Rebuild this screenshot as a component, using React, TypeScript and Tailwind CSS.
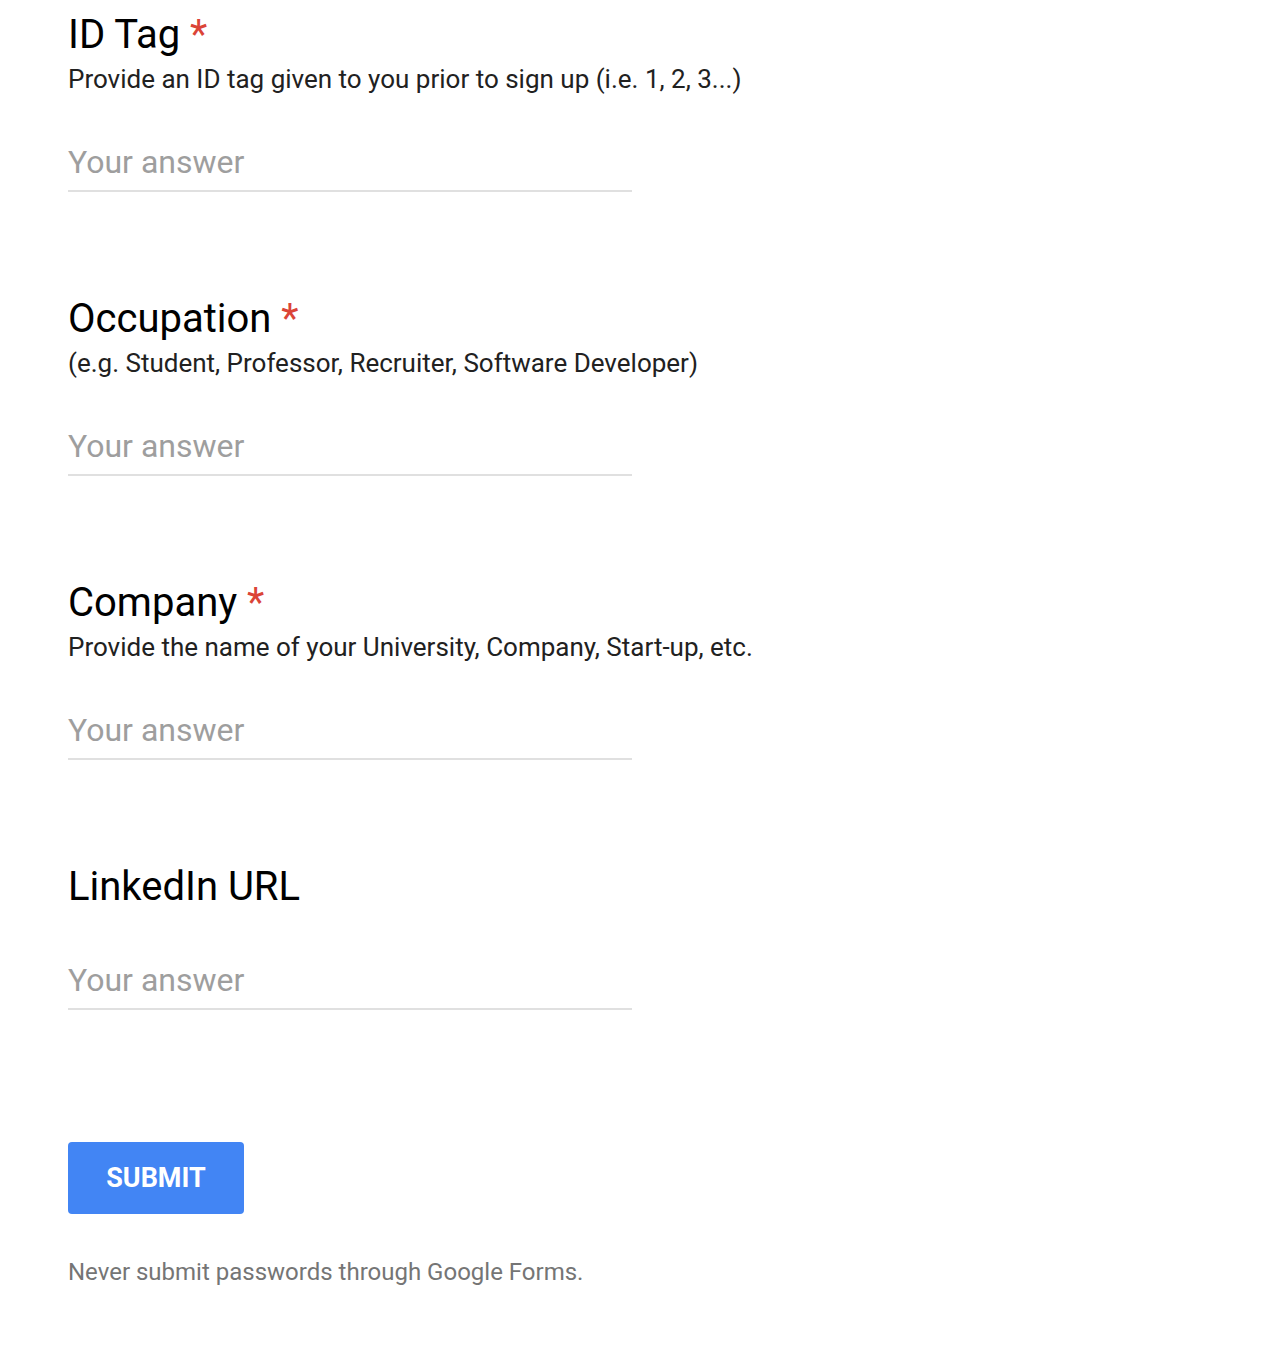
import React from "react";

const font = { fontFamily: "Roboto, 'Noto Sans', sans-serif" };

function Field({
  title,
  required,
  desc,
  first,
}: {
  title: string;
  required?: boolean;
  desc?: string;
  first?: boolean;
}) {
  return (
    <div className={first ? "pt-[11px]" : "mt-[103px]"}>
      <div className="text-[40px] leading-[48px] text-black">
        {title}
        {required && <span className="text-[#db4437]"> *</span>}
      </div>
      {desc && (
        <div className="mt-[4px] text-[26px] leading-[32px] text-[#212121]">{desc}</div>
      )}
      <div
        className={`${desc ? "mt-[47px]" : "mt-[49px]"} w-[564px] border-b-2 border-[#e0e0e0] pb-[8px] text-[32px] leading-[40px] text-[#9e9e9e]`}
      >
        Your answer
      </div>
    </div>
  );
}

export default function App() {
  return (
    <div className="min-h-[1366px] bg-white pl-[68px]" style={font}>
      <Field
        first
        title="ID Tag"
        required
        desc="Provide an ID tag given to you prior to sign up (i.e. 1, 2, 3...)"
      />
      <Field
        title="Occupation"
        required
        desc="(e.g. Student, Professor, Recruiter, Software Developer)"
      />
      <Field
        title="Company"
        required
        desc="Provide the name of your University, Company, Start-up, etc."
      />
      <Field title="LinkedIn URL" />
      <button className="mt-[132px] flex h-[72px] w-[176px] items-center justify-center rounded-[4px] bg-[#4285f4] text-[27px] font-bold text-white">
        SUBMIT
      </button>
      <div className="mt-[42px] text-[24px] leading-[32px] text-[#757575]">
        Never submit passwords through Google Forms.
      </div>
    </div>
  );
}
